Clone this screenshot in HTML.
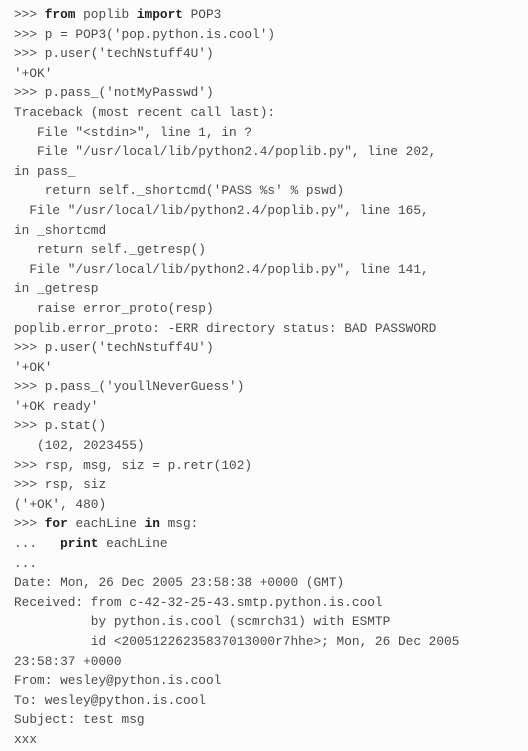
<!DOCTYPE html>
<html><head><style>
html,body{margin:0;padding:0;background:#fcfcfc;}
body{width:528px;height:751px;overflow:hidden;position:relative;}
.c{position:absolute;left:14px;top:5px;font-family:"Liberation Mono",monospace;font-size:12.8px;line-height:19.6px;color:#4a4a4a;white-space:pre;}
b{color:#222;}
</style></head><body>
<div class="c">&gt;&gt;&gt; <b>from</b> poplib <b>import</b> POP3
&gt;&gt;&gt; p = POP3('pop.python.is.cool')
&gt;&gt;&gt; p.user('techNstuff4U')
'+OK'
&gt;&gt;&gt; p.pass_('notMyPasswd')
Traceback (most recent call last):
   File "&lt;stdin&gt;", line 1, in ?
   File "/usr/local/lib/python2.4/poplib.py", line 202,
in pass_
    return self._shortcmd('PASS %s' % pswd)
  File "/usr/local/lib/python2.4/poplib.py", line 165,
in _shortcmd
   return self._getresp()
  File "/usr/local/lib/python2.4/poplib.py", line 141,
in _getresp
   raise error_proto(resp)
poplib.error_proto: -ERR directory status: BAD PASSWORD
&gt;&gt;&gt; p.user('techNstuff4U')
'+OK'
&gt;&gt;&gt; p.pass_('youllNeverGuess')
'+OK ready'
&gt;&gt;&gt; p.stat()
   (102, 2023455)
&gt;&gt;&gt; rsp, msg, siz = p.retr(102)
&gt;&gt;&gt; rsp, siz
('+OK', 480)
&gt;&gt;&gt; <b>for</b> eachLine <b>in</b> msg:
...   <b>print</b> eachLine
...
Date: Mon, 26 Dec 2005 23:58:38 +0000 (GMT)
Received: from c-42-32-25-43.smtp.python.is.cool
          by python.is.cool (scmrch31) with ESMTP
          id &lt;20051226235837013000r7hhe&gt;; Mon, 26 Dec 2005
23:58:37 +0000
From: wesley@python.is.cool
To: wesley@python.is.cool
Subject: test msg
xxx</div>
</body></html>
